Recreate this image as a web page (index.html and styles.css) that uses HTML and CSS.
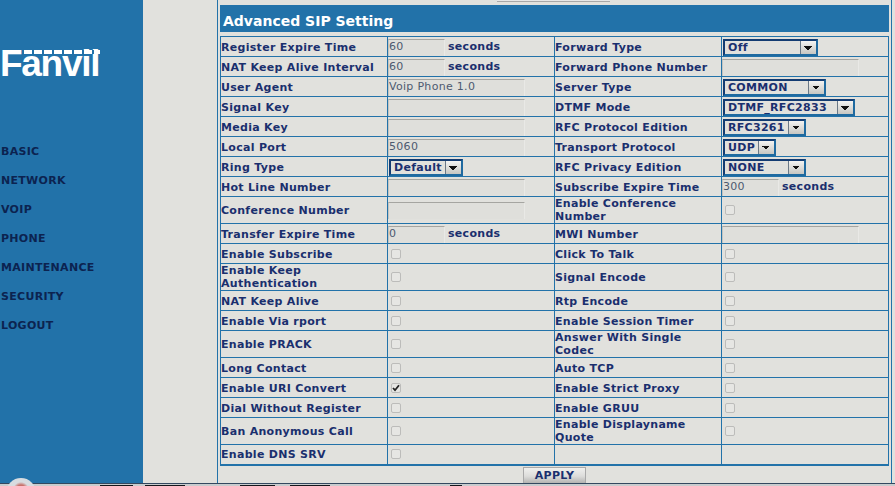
FILE: index.html
```html
<!DOCTYPE html>
<html>
<head>
    <title>Advanced SIP Setting</title>
    <link rel="stylesheet" href="styles.css">
</head>
<body>
    <div class="page">
        <div class="sidebar">
            <div class="logo">
                <span class="logo-text">Fanvil</span>
                <span class="logo-dashes"></span>
            </div>
            <ul class="menu">
                <li>BASIC</li>
                <li>NETWORK</li>
                <li>VOIP</li>
                <li>PHONE</li>
                <li>MAINTENANCE</li>
                <li>SECURITY</li>
                <li>LOGOUT</li>
            </ul>
        </div>

        <div class="main">
            <div class="frame">
                <div class="top-stub"><span class="stub-button"></span></div>
                <h2 class="title">Advanced SIP Setting</h2>
                <table class="sip-table">
                    <tr>
                        <td>Register Expire Time</td>
                        <td><input class="field short" value="60"><b class="unit">seconds</b></td>
                        <td>Forward Type</td>
                        <td><select class="sel w95"><option>Off</option></select></td>
                    </tr>
                    <tr>
                        <td>NAT Keep Alive Interval</td>
                        <td><input class="field short" value="60"><b class="unit">seconds</b></td>
                        <td>Forward Phone Number</td>
                        <td><input class="field"></td>
                    </tr>
                    <tr>
                        <td>User Agent</td>
                        <td><input class="field" value="Voip Phone 1.0"></td>
                        <td>Server Type</td>
                        <td><select class="sel w103"><option>COMMON</option></select></td>
                    </tr>
                    <tr>
                        <td>Signal Key</td>
                        <td><input class="field"></td>
                        <td>DTMF Mode</td>
                        <td><select class="sel w132"><option>DTMF_RFC2833</option></select></td>
                    </tr>
                    <tr>
                        <td>Media Key</td>
                        <td><input class="field"></td>
                        <td>RFC Protocol Edition</td>
                        <td><select class="sel w83"><option>RFC3261</option></select></td>
                    </tr>
                    <tr>
                        <td>Local Port</td>
                        <td><input class="field" value="5060"></td>
                        <td>Transport Protocol</td>
                        <td><select class="sel w53"><option>UDP</option></select></td>
                    </tr>
                    <tr>
                        <td>Ring Type</td>
                        <td><select class="sel w74"><option>Default</option></select></td>
                        <td>RFC Privacy Edition</td>
                        <td><select class="sel w83"><option>NONE</option></select></td>
                    </tr>
                    <tr>
                        <td>Hot Line Number</td>
                        <td><input class="field"></td>
                        <td>Subscribe Expire Time</td>
                        <td><input class="field short" value="300"><b class="unit">seconds</b></td>
                    </tr>
                    <tr class="tall">
                        <td>Conference Number</td>
                        <td><input class="field"></td>
                        <td>Enable Conference Number</td>
                        <td><input type="checkbox" class="check"></td>
                    </tr>
                    <tr>
                        <td>Transfer Expire Time</td>
                        <td><input class="field short" value="0"><b class="unit">seconds</b></td>
                        <td>MWI Number</td>
                        <td><input class="field"></td>
                    </tr>
                    <tr>
                        <td>Enable Subscribe</td>
                        <td><input type="checkbox" class="check"></td>
                        <td>Click To Talk</td>
                        <td><input type="checkbox" class="check"></td>
                    </tr>
                    <tr class="tall">
                        <td>Enable Keep Authentication</td>
                        <td><input type="checkbox" class="check"></td>
                        <td>Signal Encode</td>
                        <td><input type="checkbox" class="check"></td>
                    </tr>
                    <tr>
                        <td>NAT Keep Alive</td>
                        <td><input type="checkbox" class="check"></td>
                        <td>Rtp Encode</td>
                        <td><input type="checkbox" class="check"></td>
                    </tr>
                    <tr>
                        <td>Enable Via rport</td>
                        <td><input type="checkbox" class="check"></td>
                        <td>Enable Session Timer</td>
                        <td><input type="checkbox" class="check"></td>
                    </tr>
                    <tr class="tall">
                        <td>Enable PRACK</td>
                        <td><input type="checkbox" class="check"></td>
                        <td>Answer With Single Codec</td>
                        <td><input type="checkbox" class="check"></td>
                    </tr>
                    <tr>
                        <td>Long Contact</td>
                        <td><input type="checkbox" class="check"></td>
                        <td>Auto TCP</td>
                        <td><input type="checkbox" class="check"></td>
                    </tr>
                    <tr>
                        <td>Enable URI Convert</td>
                        <td><input type="checkbox" class="check" checked></td>
                        <td>Enable Strict Proxy</td>
                        <td><input type="checkbox" class="check"></td>
                    </tr>
                    <tr>
                        <td>Dial Without Register</td>
                        <td><input type="checkbox" class="check"></td>
                        <td>Enable GRUU</td>
                        <td><input type="checkbox" class="check"></td>
                    </tr>
                    <tr class="tall">
                        <td>Ban Anonymous Call</td>
                        <td><input type="checkbox" class="check"></td>
                        <td>Enable Displayname Quote</td>
                        <td><input type="checkbox" class="check"></td>
                    </tr>
                    <tr>
                        <td>Enable DNS SRV</td>
                        <td><input type="checkbox" class="check"></td>
                        <td></td>
                        <td></td>
                    </tr>
                </table>
                <div class="apply-row">
                    <button class="apply">APPLY</button>
                </div>
            </div>
        </div>
    </div>

    <div class="taskbar">
        <span class="orb"></span>
        <span class="task-dark t1"></span>
        <span class="task-dark t2"></span>
        <span class="task-dark t3"></span>
        <span class="task-dark t4"></span>
        <span class="task-dark t5"></span>
    </div>
</body>
</html>
```

FILE: styles.css
```css
* {
    box-sizing: border-box;
}
html, body {
    margin: 0;
    height: 486px;
    overflow: hidden;
}
body {
    display: flex;
    flex-direction: column;
    position: relative;
    background: #e1e1dd;
    font-family: "DejaVu Sans", Verdana, sans-serif;
    font-size: 11px;
    letter-spacing: 0.3px;
    color: #1a2f6e;
}

.page {
    display: flex;
    height: 483px;
    overflow: hidden;
}

/* left menu */
.sidebar {
    width: 143px;
    flex-shrink: 0;
    background: #2272a9;
    padding-top: 41px;
}
.logo {
    position: relative;
    height: 38px;
}
.logo-text {
    display: block;
    font-family: "Liberation Sans", Arial, sans-serif;
    font-size: 37px;
    font-weight: bold;
    letter-spacing: -1.3px;
    line-height: 46px;
    color: #fff;
}
.logo-dashes {
    position: absolute;
    left: 24px;
    top: 9px;
    width: 76px;
    height: 4px;
    background: repeating-linear-gradient(90deg, #fff 0 8px, #2272a9 8px 10px);
}
.menu {
    list-style: none;
    margin: 0;
    padding: 0;
    margin-top: 58px;
    font-weight: bold;
    color: #0c2350;
}
.menu li {
    height: 29px;
    line-height: 29px;
    padding-left: 1px;
}

/* settings panel */
.main {
    flex: 1;
    padding-left: 74px;
}
.frame {
    width: 675px;
    height: 100%;
    border-left: 1px solid #2272a9;
    border-right: 1px solid #2272a9;
    padding: 0 2px;
}
.top-stub {
    height: 5px;
    position: relative;
}
.stub-button {
    display: block;
    position: relative;
    left: 277px;
    width: 113px;
    height: 2px;
    background: #e6e6e6;
    border-bottom: 1px solid #a8a8a8;
}
.title {
    margin: 0;
    height: 27px;
    padding: 5px 0 0 3px;
    line-height: 22px;
    background: #2272a9;
    color: #fff;
    font-size: 14px;
    font-weight: bold;
    letter-spacing: 0;
}
.sip-table {
    margin-top: 4px;
    width: 669px;
    table-layout: fixed;
    border-collapse: collapse;
    border-bottom: 2px solid #2272a9;
    font-weight: bold;
}
.sip-table td {
    height: 20px;
    padding: 1px 0 0;
    border: 1px solid #2272a9;
    line-height: 13px;
    vertical-align: middle;
}
.sip-table tr.tall td {
    height: 27px;
    padding: 0;
}

.field {
    display: block;
    float: left;
    width: 137px;
    height: 17px;
    padding: 0 0 2px;
    border: 0;
    border-top: 1px solid #a5a5a1;
    border-left: 1px solid #c4c4c0;
    border-right: 1px solid #e9e9e6;
    background: #dfdfdb;
    font-family: inherit;
    font-size: 11px;
    letter-spacing: 0.3px;
    color: #4d5a70;
}
.field.short {
    width: 57px;
}
.unit {
    display: inline-block;
    margin-left: 3px;
    line-height: 15px;
}

.sel {
    display: block;
    height: 17px;
    margin-left: 1px;
    padding: 0 0 0 3px;
    appearance: none;
    border: 2px solid #143c72;
    border-right-color: #1f6aa0;
    border-bottom-color: #1f6aa0;
    border-radius: 0;
    font-family: inherit;
    font-size: 11px;
    font-weight: bold;
    letter-spacing: 0.3px;
    color: #1a2f6e;
    background-color: #e1e1dd;
    background-image:
        linear-gradient(45deg, transparent 50%, #111 50%),
        linear-gradient(-45deg, transparent 50%, #111 50%),
        linear-gradient(#6a7886, #6a7886),
        linear-gradient(#f4f4f2, #c6c6c2);
    background-repeat: no-repeat;
    background-size: 4px 4px, 4px 4px, 1px 13px, 15px 13px;
    background-position: right 8px top 5px, right 4px top 5px, right 15px top 0, right 0 top 0;
}
.w53 { width: 53px; }
.w74 { width: 74px; }
.w83 { width: 83px; }
.w95 { width: 95px; }
.w103 { width: 103px; }
.w132 { width: 132px; }

.check {
    display: block;
    appearance: none;
    width: 10px;
    height: 10px;
    margin: 0 0 1px 3px;
    border: 1px solid #bcbcba;
    border-radius: 2px;
    background: #e6e6e3;
}
.check:checked {
    background: #e6e6e3 url("data:image/svg+xml,%3Csvg xmlns='http://www.w3.org/2000/svg' width='8' height='8'%3E%3Cpath d='M1 4l2 2.2 4-5' fill='none' stroke='%23222' stroke-width='1.8'/%3E%3C/svg%3E") center no-repeat;
}

.apply-row {
    display: flex;
    justify-content: center;
    padding-top: 1px;
}
.apply {
    width: 63px;
    height: 16px;
    padding: 0;
    border: 1px solid #a9a9a9;
    border-bottom: 0;
    background: linear-gradient(#f0f0ee, #dcdcda 55%, #b4b4b2);
    font-family: inherit;
    font-size: 11px;
    font-weight: bold;
    letter-spacing: 0.3px;
    color: #1a2f6e;
}

/* strip of the desktop below the window */
.taskbar {
    height: 3px;
    background: #c9ccce;
    border-top: 1px solid #33485f;
}
.orb {
    position: absolute;
    left: 6px;
    top: 478px;
    width: 30px;
    height: 30px;
    border-radius: 50%;
    background: radial-gradient(circle at 50% 40%, #c9716a 0 5px, #d8dce0 8px);
}
.task-dark {
    position: absolute;
    top: 485px;
    height: 1px;
    background: #15181c;
}
.t1 { left: 100px; width: 33px; }
.t2 { left: 145px; width: 40px; }
.t3 { left: 240px; width: 35px; }
.t4 { left: 290px; width: 40px; }
.t5 { left: 450px; width: 12px; }
```
